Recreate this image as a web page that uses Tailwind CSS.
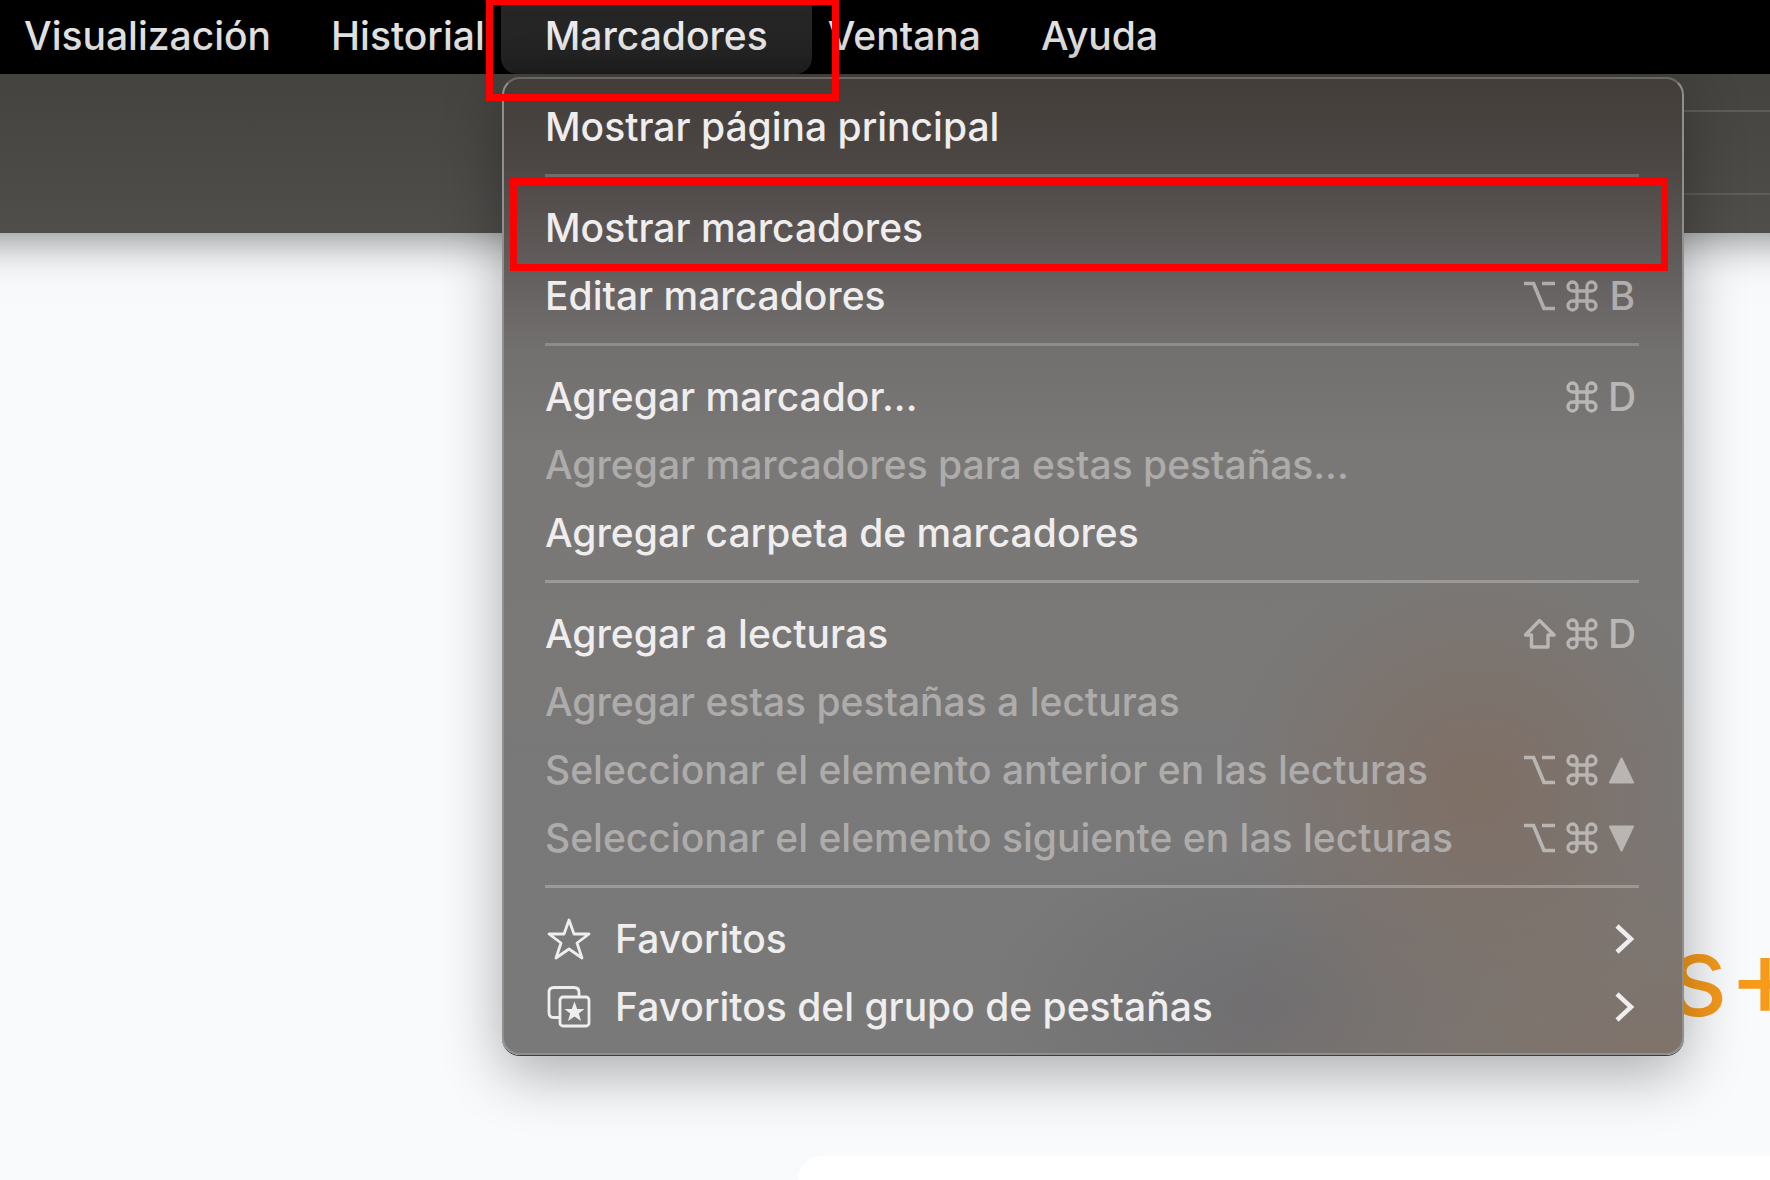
<!DOCTYPE html>
<html lang="es">
<head>
<meta charset="utf-8">
<title>Menú Marcadores</title>
<script src="https://cdn.jsdelivr.net/npm/@tailwindcss/browser@4"></script>
</head>
<body class="relative flex min-h-screen flex-col overflow-hidden bg-[#f8fafc] font-['Inter',sans-serif] text-[39px] leading-[48px] font-medium">

<svg class="hidden" aria-hidden="true">
  <symbol id="cmd" viewBox="0 0 32 32"><path d="M11 11V6.500A4.500 4.500 0 1 0 6.500 11H25.500A4.500 4.500 0 1 0 21 6.500V25.500A4.500 4.500 0 1 0 25.500 21H6.500A4.500 4.500 0 1 0 11 25.500Z" fill="none" stroke="currentColor" stroke-width="3.300"/></symbol>
  <symbol id="opt" viewBox="0 0 32 32"><path d="M0 3.500H9.500L20 28.500H31M18 3.500H31" fill="none" stroke="currentColor" stroke-width="3.700"/></symbol>
  <symbol id="shift" viewBox="0 0 32 32"><path d="M15.500 2.500L30 17H24V29H7.500V17H1.500Z" fill="none" stroke="currentColor" stroke-width="3.400" stroke-linejoin="round"/></symbol>
  <symbol id="up" viewBox="0 0 25 32"><path d="M12.500 4.500L24 28.500H1Z" fill="currentColor" stroke="currentColor" stroke-width="2" stroke-linejoin="round"/></symbol>
  <symbol id="down" viewBox="0 0 25 32"><path d="M1 4.500H24L12.500 28.500Z" fill="currentColor" stroke="currentColor" stroke-width="2" stroke-linejoin="round"/></symbol>
  <symbol id="chev" viewBox="0 0 20 32"><path d="M2 3L16 16L2 29" fill="none" stroke="currentColor" stroke-width="4.500"/></symbol>
</svg>

<nav class="flex h-[74px] shrink-0 items-stretch bg-black text-[#e4e4e4]" aria-label="Barra de menús">
  <button class="-ml-[6px] px-[30px] pb-[2px]">Visualización</button>
  <button class="px-[30px] pb-[2px]">Historial</button>
  <button class="relative -mx-[14px] rounded-b-2xl bg-[#262626] px-11 pb-[2px] text-[#ececec]">Marcadores</button>
  <button class="px-[30px] pb-[2px]">Ventana</button>
  <button class="px-[30px] pb-[2px]">Ayuda</button>
</nav>

<header class="z-10 -mx-16 flex h-[159px] shrink-0 items-center justify-end bg-linear-to-b from-[#444340] to-[#504e4b] pb-[2px] shadow-[0_4px_44px_rgba(0,0,0,0.5)]">
  <input aria-label="Dirección" class="h-[85px] w-1/3 border-2 border-[#5e5d5b] bg-transparent">
</header>

<main class="flex flex-1 flex-col justify-between">
  <h1 class="mt-[688px] -mr-8 flex justify-end text-[112px] leading-[108px] font-normal text-[#f59a1b]">s+</h1>
  <section class="ml-[798px] h-[24px] rounded-tl-3xl bg-white"></section>
</main>

<div role="menu" class="absolute top-[77px] right-[86px] left-[502px] z-20 rounded-[18px] border-2 border-[#918f8e] border-t-[#6b6765] bg-[radial-gradient(ellipse_250px_240px_at_975px_710px,#7f6f65,transparent),radial-gradient(ellipse_500px_260px_at_1180px_1000px,#807268,transparent),radial-gradient(ellipse_280px_170px_at_760px_930px,#6f6e71,transparent),linear-gradient(to_bottom,#433d3a_0px,#4d4745_90px,#625e5d_190px,#72706f_270px,#7a7877_370px,#797979_100%)] pt-[14px] pb-[12px] text-[#efeded] shadow-[0_1px_0_#3c3c3c,0_18px_60px_rgba(0,0,0,0.32)]">
  <button role="menuitem" class="flex h-[68px] w-full items-center pr-[43px] pl-[41px]">Mostrar página principal</button>
  <hr class="mt-[13px] mr-[43px] mb-[17px] ml-[41px] border-t-3 border-white/20">
  <button role="menuitem" class="relative flex h-[68px] w-full items-center pr-[43px] pl-[41px]">Mostrar marcadores
    <span class="absolute -top-[16px] right-[14px] -bottom-[9px] left-[6px] border-[7px] border-[#ff0000]"></span>
  </button>
  <button role="menuitem" class="flex h-[68px] w-full items-center pr-[43px] pl-[41px]">Editar marcadores
    <span class="ml-auto flex items-center gap-[10px] pr-1 text-[#b0adac]"><svg class="size-8"><use href="#opt"/></svg><svg class="size-8"><use href="#cmd"/></svg><kbd class="w-[27px] text-right font-[Inter]">B</kbd></span></button>
  <hr class="mt-[13px] mr-[43px] mb-[17px] ml-[41px] border-t-3 border-white/20">
  <button role="menuitem" class="flex h-[68px] w-full items-center pr-[43px] pl-[41px]">Agregar marcador...
    <span class="ml-auto flex items-center gap-[10px] pr-1 text-[#b9b7b6]"><svg class="size-8"><use href="#cmd"/></svg><kbd class="w-[27px] text-right font-[Inter]">D</kbd></span></button>
  <button role="menuitem" disabled class="flex h-[68px] w-full items-center pr-[43px] pl-[41px] text-[#aeacab]">Agregar marcadores para estas pestañas...</button>
  <button role="menuitem" class="flex h-[68px] w-full items-center pr-[43px] pl-[41px]">Agregar carpeta de marcadores</button>
  <hr class="mt-[13px] mr-[43px] mb-[17px] ml-[41px] border-t-3 border-white/25">
  <button role="menuitem" class="flex h-[68px] w-full items-center pr-[43px] pl-[41px]">Agregar a lecturas
    <span class="ml-auto flex items-center gap-[10px] pr-1 text-[#b9b7b6]"><svg class="size-8"><use href="#shift"/></svg><svg class="size-8"><use href="#cmd"/></svg><kbd class="w-[27px] text-right font-[Inter]">D</kbd></span></button>
  <button role="menuitem" disabled class="flex h-[68px] w-full items-center pr-[43px] pl-[41px] text-[#aeacab]">Agregar estas pestañas a lecturas</button>
  <button role="menuitem" disabled class="flex h-[68px] w-full items-center pr-[43px] pl-[41px] text-[#aeacab]">Seleccionar el elemento anterior en las lecturas
    <span class="ml-auto flex items-center gap-[10px] pr-1 text-[#b9b5b3]"><svg class="size-8"><use href="#opt"/></svg><svg class="size-8"><use href="#cmd"/></svg><svg class="h-8 w-[27px]"><use href="#up"/></svg></span></button>
  <button role="menuitem" disabled class="flex h-[68px] w-full items-center pr-[43px] pl-[41px] text-[#aeacab]">Seleccionar el elemento siguiente en las lecturas
    <span class="ml-auto flex items-center gap-[10px] pr-1 text-[#b9b5b3]"><svg class="size-8"><use href="#opt"/></svg><svg class="size-8"><use href="#cmd"/></svg><svg class="h-8 w-[27px]"><use href="#down"/></svg></span></button>
  <hr class="mt-[13px] mr-[43px] mb-[17px] ml-[41px] border-t-3 border-white/25">
  <button role="menuitem" class="flex h-[68px] w-full items-center pr-[43px] pl-[41px]">
    <svg class="mr-6 size-[46px]" viewBox="0 0 46 46"><path d="M24 4L29 18H44L32 27L37 42L24 33L11 42L16 27L4 18H19Z" fill="none" stroke="currentColor" stroke-width="2.800" stroke-linejoin="round"/></svg>
    Favoritos<svg class="mr-1 ml-auto h-8 w-5"><use href="#chev"/></svg></button>
  <button role="menuitem" class="flex h-[68px] w-full items-center pr-[43px] pl-[41px]">
    <svg class="mr-6 size-[46px]" viewBox="0 0 46 46"><g fill="none" stroke="currentColor" stroke-width="2.800"><rect x="15" y="13" width="29" height="29" rx="3"/><path d="M15 33.500H9Q4 33.500 4 28.500V8.500Q4 3.500 9 3.500H29Q34 3.500 34 8.500V13"/></g><path d="M29.500 17.500L32.200 25H39.500L33.800 29.500L36 37L29.500 32.500L23 37L25.200 29.500L19.500 25H26.800Z" fill="currentColor"/></svg>
    Favoritos del grupo de pestañas<svg class="mr-1 ml-auto h-8 w-5"><use href="#chev"/></svg></button>
</div>

<div class="pointer-events-none absolute top-0 left-[486px] z-30 h-[101px] w-[353px] border-[7px] border-t-[5px] border-[#ff0000]"></div>
</body>
</html>
